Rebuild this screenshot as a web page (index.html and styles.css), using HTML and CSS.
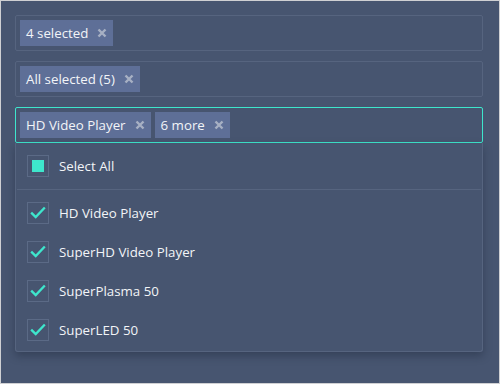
FILE: index.html
```html
<!DOCTYPE html>
<html lang="en">
<head>
    <meta charset="UTF-8">
    <meta name="viewport" content="width=device-width, initial-scale=1.0">
    <title>Multi Select</title>
    <link rel="stylesheet" href="styles.css">
</head>
<body>
    <div class="frame">
        <div class="select">
            <span class="tag">4 selected <svg class="remove" viewBox="0 0 10 10" width="10" height="10"><path d="M1.5 1.5 L8.5 8.5 M8.5 1.5 L1.5 8.5" /></svg></span>
        </div>

        <div class="select">
            <span class="tag">All selected (5) <svg class="remove" viewBox="0 0 10 10" width="10" height="10"><path d="M1.5 1.5 L8.5 8.5 M8.5 1.5 L1.5 8.5" /></svg></span>
        </div>

        <div class="select focused">
            <span class="tag">HD Video Player <svg class="remove" viewBox="0 0 10 10" width="10" height="10"><path d="M1.5 1.5 L8.5 8.5 M8.5 1.5 L1.5 8.5" /></svg></span>
            <span class="tag">6 more <svg class="remove" viewBox="0 0 10 10" width="10" height="10"><path d="M1.5 1.5 L8.5 8.5 M8.5 1.5 L1.5 8.5" /></svg></span>
        </div>

        <div class="dropdown">
            <div class="option select-all">
                <span class="checkbox"><span class="partial"></span></span>
                Select All
            </div>
            <div class="list">
                <div class="option">
                    <span class="checkbox"><svg viewBox="0 0 22 22" width="20" height="20"><path d="M3.5 10.5 L8.5 15.5 L18.5 5" /></svg></span>
                    HD Video Player
                </div>
                <div class="option">
                    <span class="checkbox"><svg viewBox="0 0 22 22" width="20" height="20"><path d="M3.5 10.5 L8.5 15.5 L18.5 5" /></svg></span>
                    SuperHD Video Player
                </div>
                <div class="option">
                    <span class="checkbox"><svg viewBox="0 0 22 22" width="20" height="20"><path d="M3.5 10.5 L8.5 15.5 L18.5 5" /></svg></span>
                    SuperPlasma 50
                </div>
                <div class="option">
                    <span class="checkbox"><svg viewBox="0 0 22 22" width="20" height="20"><path d="M3.5 10.5 L8.5 15.5 L18.5 5" /></svg></span>
                    SuperLED 50
                </div>
            </div>
        </div>
    </div>
</body>
</html>
```

FILE: styles.css
```css
body {
    margin: 0;
    font-family: "Open Sans", "Noto Sans", sans-serif;
    font-size: 13.3px;
    color: #f2f4f7;
}
.frame {
    box-sizing: border-box;
    width: 500px;
    height: 384px;
    border: 1px solid #cfd0d3;
    background-color: #475570;
    padding: 14px 16px 14px 14px;
}
.select {
    display: flex;
    gap: 4px;
    height: 26px;
    padding: 4px;
    border: 1px solid #56647f;
    border-radius: 2px;
    margin-bottom: 10px;
}
.select.focused {
    border-color: #3ee6cc;
    margin-bottom: 0;
}
.tag {
    display: flex;
    align-items: center;
    gap: 9px;
    padding: 0 6px;
    background-color: #5e6f97;
    line-height: 26px;
}
.remove path {
    fill: none;
    stroke: #a7b0c3;
    stroke-width: 2.4;
}
.dropdown {
    border: 1px solid #56647f;
    border-top: none;
    border-radius: 0 0 3px 3px;
    box-shadow: 0 4px 8px rgba(20, 28, 45, 0.35);
}
.option {
    display: flex;
    align-items: center;
    gap: 10px;
    height: 22px;
    padding-left: 11px;
}
.select-all {
    padding-top: 12px;
    padding-bottom: 12px;
    border-bottom: 1px solid #56647f;
    margin: 0 1px;
    padding-left: 10px;
}
.list {
    display: flex;
    flex-direction: column;
    gap: 17px;
    padding: 12px 0 10px;
}
.checkbox {
    box-sizing: border-box;
    display: flex;
    align-items: center;
    justify-content: center;
    width: 22px;
    height: 22px;
    border: 1px solid #5b6a86;
}
.partial {
    width: 12px;
    height: 12px;
    background-color: #3ee6cc;
}
.checkbox svg path {
    fill: none;
    stroke: #3ee6cc;
    stroke-width: 2.6;
}
```
